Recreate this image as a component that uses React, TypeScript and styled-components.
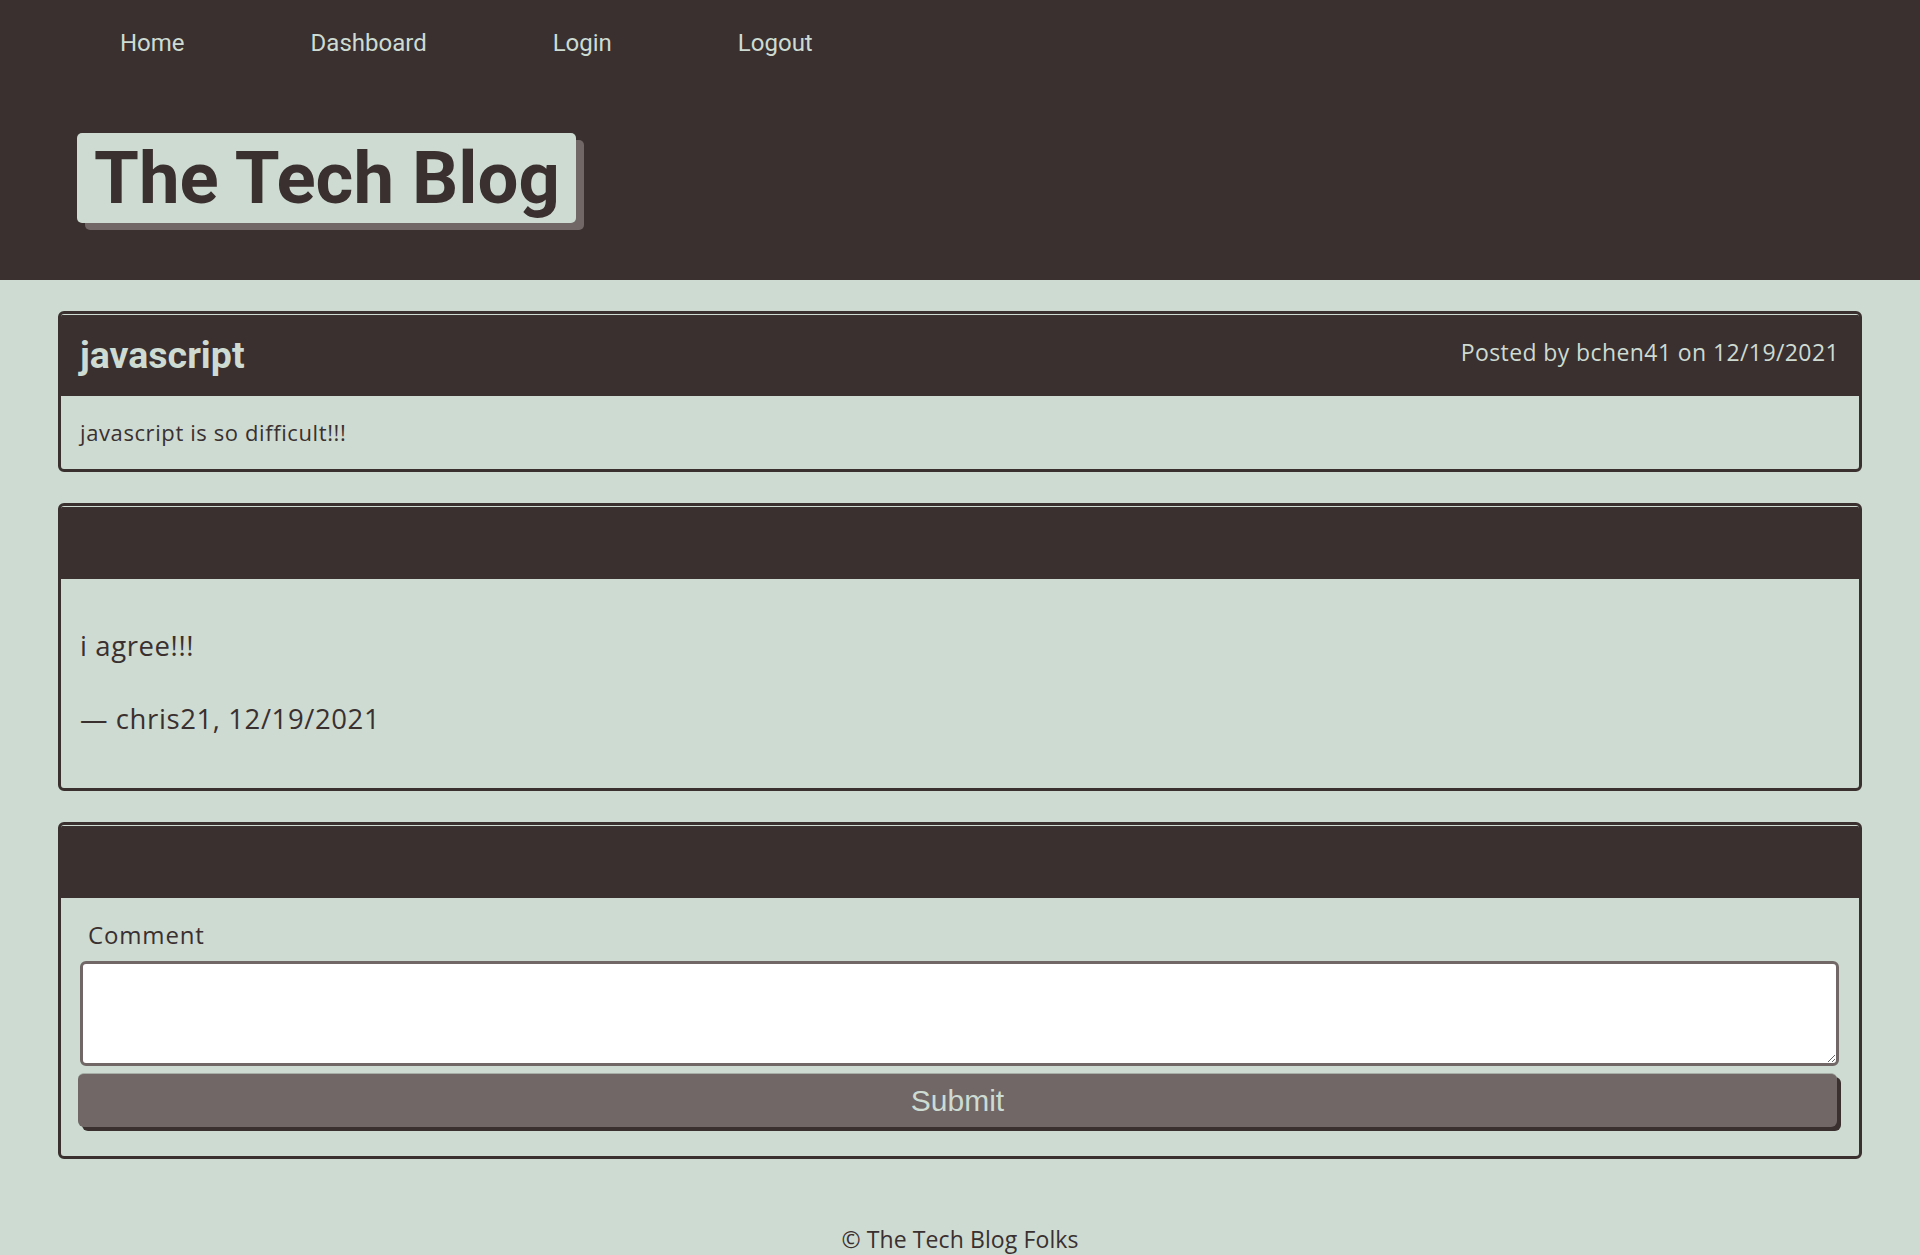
import React from "react";
import styled, { createGlobalStyle } from "styled-components";

const DARK = "#3a3030";
const LIGHT = "#cddbd2";
const MID = "#706766";
const BODY_FONT = `"Open Sans", Roboto, "Noto Sans", sans-serif`;

const GlobalStyle = createGlobalStyle`
  html, body {
    margin: 0;
    padding: 0;
    background: ${LIGHT};
    font-family: ${BODY_FONT};
    color: ${DARK};
  }
  * { box-sizing: border-box; }
`;

const Header = styled.header`
  background: ${DARK};
  height: 280px;
  padding: 29px 0 0 0;
`;

const Nav = styled.nav`
  display: flex;
  gap: 126px;
  padding-left: 120px;
`;

const NavLink = styled.a`
  font-family: Roboto, sans-serif;
  font-size: 24px;
  line-height: 28px;
  color: ${LIGHT};
  text-decoration: none;
  cursor: pointer;
`;

const TitleBox = styled.h1`
  display: inline-block;
  margin: 76px 0 0 77px;
  padding: 4px 16px 2px 17px;
  background: ${LIGHT};
  color: ${DARK};
  border-radius: 5px;
  box-shadow: 8px 7px 0 ${MID};
  font-family: Roboto, sans-serif;
  font-size: 72.5px;
  font-weight: 700;
  line-height: 84px;
`;

const Main = styled.main`
  display: flex;
  flex-direction: column;
  gap: 31px;
  padding: 31px 58px 0;
`;

const Card = styled.section`
  border: 3px solid ${DARK};
  border-radius: 6px;
  background: ${LIGHT};
  overflow: hidden;
`;

const CardHeader = styled.div`
  margin-top: 1px;
  min-height: 72px;
  background: ${DARK};
  color: ${LIGHT};
  display: flex;
  align-items: center;
  justify-content: space-between;
  padding: 0 20px 0 19px;
`;

const PostTitle = styled.h2`
  margin: 0;
  font-family: Roboto, sans-serif;
  font-size: 37.5px;
  font-weight: 700;
  line-height: 81px;
`;

const Meta = styled.span`
  font-size: 23px;
  line-height: 28px;
  letter-spacing: 0.4px;
  margin-top: -8px;
`;

const PostBody = styled.div`
  padding: 23px 19px 24px;
  font-size: 22px;
  line-height: 26px;
  letter-spacing: 0.6px;
`;

const CommentBody = styled.div`
  display: flex;
  flex-direction: column;
  gap: 37px;
  padding: 49px 19px 51px;
`;

const CommentText = styled.p`
  margin: 0;
  font-size: 27.5px;
  line-height: 36px;
  letter-spacing: 0.6px;
`;

const Form = styled.form`
  display: flex;
  flex-direction: column;
  padding: 23px 20px 29px 19px;
`;

const Label = styled.label`
  font-size: 24px;
  line-height: 28px;
  letter-spacing: 0.85px;
  padding-left: 8px;
  margin-bottom: 12px;
`;

const TextArea = styled.textarea`
  display: block;
  width: 100%;
  height: 105px;
  border: 3px solid ${MID};
  border-radius: 6px;
  background: #ffffff;
  font-family: ${BODY_FONT};
  font-size: 18px;
  resize: vertical;
`;

const SubmitButton = styled.button`
  margin: 7px 2px 0 -2px;
  height: 54px;
  border: none;
  border-top: 1px solid #a7aea8;
  border-radius: 6px;
  background: ${MID};
  color: ${LIGHT};
  box-shadow: 4px 4px 0 ${DARK};
  font-family: "Liberation Sans", Arial, sans-serif;
  font-size: 30px;
  cursor: pointer;
`;

const Footer = styled.footer`
  text-align: center;
  font-size: 23px;
  line-height: 26px;
  letter-spacing: 0.1px;
  padding: 67px 0 20px;
`;

export default function App() {
  return (
    <>
      <GlobalStyle />
      <Header>
        <Nav>
          <NavLink>Home</NavLink>
          <NavLink>Dashboard</NavLink>
          <NavLink>Login</NavLink>
          <NavLink>Logout</NavLink>
        </Nav>
        <TitleBox>The Tech Blog</TitleBox>
      </Header>
      <Main>
        <Card>
          <CardHeader>
            <PostTitle>javascript</PostTitle>
            <Meta>Posted by bchen41 on 12/19/2021</Meta>
          </CardHeader>
          <PostBody>javascript is so difficult!!!</PostBody>
        </Card>
        <Card>
          <CardHeader />
          <CommentBody>
            <CommentText>i agree!!!</CommentText>
            <CommentText>— chris21, 12/19/2021</CommentText>
          </CommentBody>
        </Card>
        <Card>
          <CardHeader />
          <Form onSubmit={(e) => e.preventDefault()}>
            <Label htmlFor="comment">Comment</Label>
            <TextArea id="comment" />
            <SubmitButton type="submit">Submit</SubmitButton>
          </Form>
        </Card>
      </Main>
      <Footer>© The Tech Blog Folks</Footer>
    </>
  );
}
